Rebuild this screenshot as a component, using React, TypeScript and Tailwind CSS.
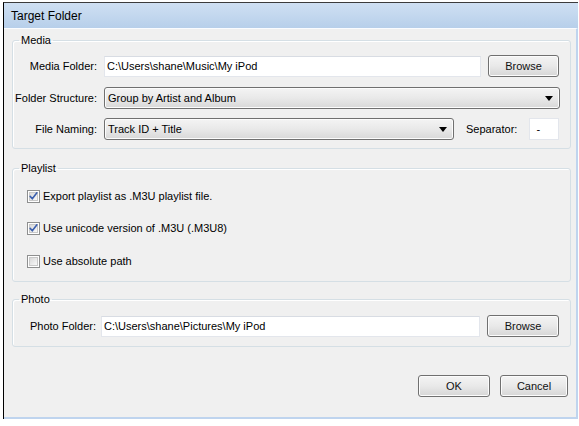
import React from "react";

const font = { fontFamily: '"Liberation Sans", Arial, sans-serif' };

function Btn({ label, w }: { label: string; w: string }) {
  return (
    <div
      className={`${w} h-[22px] shrink-0 flex items-center justify-center rounded-[3px] border border-[#707070] bg-gradient-to-b from-[#f4f4f4] via-[#e9e9e9] to-[#d6d6d6] text-[11px] text-[#111] shadow-[inset_0_0_0_1px_#fcfcfc]`}
    >
      {label}
    </div>
  );
}

function Select({ value, w }: { value: string; w: string }) {
  return (
    <div
      className={`${w} h-[22px] shrink-0 flex items-center justify-between rounded-[3px] border border-[#707070] bg-gradient-to-b from-[#f4f4f4] via-[#e9e9e9] to-[#d8d8d8] pl-[3px] pr-[6px] text-[11px] text-black shadow-[inset_0_0_0_1px_#fcfcfc]`}
    >
      <span>{value}</span>
      <svg width="8" height="5" viewBox="0 0 8 5">
        <path d="M0 0 L8 0 L4 5 Z" fill="#000" />
      </svg>
    </div>
  );
}

function Input({ value, w }: { value: string; w: string }) {
  return (
    <div
      className={`${w} h-[21px] shrink-0 flex items-center bg-white border border-[#e3e6ec] border-t-[#d8dce3] pl-[2px] text-[11px] text-black`}
    >
      {value}
    </div>
  );
}

function Check({ checked, label, cls }: { checked: boolean; label: string; cls: string }) {
  return (
    <div className={`${cls} h-[17px] flex items-center pl-[14px]`}>
      <svg width="13" height="13" viewBox="0 0 13 13" className="shrink-0">
        <defs>
          <linearGradient id="cbg" x1="0" y1="0" x2="1" y2="1">
            <stop offset="0" stopColor="#d6d6d6" />
            <stop offset="1" stopColor="#fbfbfb" />
          </linearGradient>
        </defs>
        <rect x="0.5" y="0.5" width="12" height="12" fill="#fff" stroke="#8e8f8f" />
        <rect x="2.5" y="2.5" width="8" height="8" fill="url(#cbg)" stroke="#c8c8c8" />
        {checked && (
          <path
            d="M3.2 6.4 L5.3 8.8 L9.9 2.8"
            fill="none"
            stroke="#3b5fae"
            strokeWidth="1.6"
            strokeLinecap="round"
            strokeLinejoin="round"
          />
        )}
      </svg>
      <span className="ml-[3px] text-[11px] text-black">{label}</span>
    </div>
  );
}

function Group({ title, cls, children }: { title: string; cls: string; children: React.ReactNode }) {
  return (
    <fieldset className={`${cls} rounded-[3px] border border-[#d5dfe5] shadow-[inset_1px_1px_0_#fff]`}>
      <legend className="ml-[6px] px-[2px] text-[11px] leading-[13px] text-black">{title}</legend>
      {children}
    </fieldset>
  );
}

export default function App() {
  return (
    <div className="w-[579px] h-[426px] bg-white pt-[2px] pl-[3px]" style={font}>
      <div className="w-[575px] h-[417px] flex flex-col border-l border-t border-l-black border-t-[#3c3c3c] bg-[#f0f0f0]">
        <div className="h-[25px] shrink-0 flex items-center pl-[7px] text-[12px] text-black bg-gradient-to-b from-[#cfe0f3] to-[#b7cfea]">
          Target Folder
        </div>
        <div className="flex-1 flex flex-col pl-[8px] pr-[5px] pt-[5px] border-r-2 border-b-2 border-[#bfd4ee] border-t border-t-[#fafcff]">
          <Group title="Media" cls="pb-[8px]">
            <div className="mt-[8px] h-[22px] flex items-center">
              <div className="w-[84px] text-right text-[11px] text-black">Media Folder:</div>
              <div className="ml-[7px]">
                <Input value="C:\Users\shane\Music\My iPod" w="w-[377px]" />
              </div>
              <div className="ml-[7px]">
                <Btn label="Browse" w="w-[71px]" />
              </div>
            </div>
            <div className="mt-[10px] h-[22px] flex items-center">
              <div className="w-[84px] text-right text-[11px] text-black">Folder Structure:</div>
              <div className="ml-[7px]">
                <Select value="Group by Artist and Album" w="w-[456px]" />
              </div>
            </div>
            <div className="mt-[9px] h-[22px] flex items-center">
              <div className="w-[84px] text-right text-[11px] text-black">File Naming:</div>
              <div className="ml-[7px]">
                <Select value="Track ID + Title" w="w-[350px]" />
              </div>
              <div className="ml-[12px] text-[11px] text-black">Separator:</div>
              <div className="ml-[12px] w-[30px] h-[22px] flex items-center bg-white border border-[#e3e6ec] pl-[6px] text-[11px] text-black">
                -
              </div>
            </div>
          </Group>

          <Group title="Playlist" cls="mt-[13px] pb-[11px]">
            <Check checked cls="mt-[13px]" label="Export playlist as .M3U playlist file." />
            <Check checked cls="mt-[15px]" label="Use unicode version of .M3U (.M3U8)" />
            <Check checked={false} cls="mt-[16px]" label="Use absolute path" />
          </Group>

          <Group title="Photo" cls="mt-[11px] pb-[9px]">
            <div className="mt-[9px] h-[22px] flex items-center">
              <div className="w-[83px] text-right text-[11px] text-black">Photo Folder:</div>
              <div className="ml-[5px]">
                <Input value="C:\Users\shane\Pictures\My iPod" w="w-[379px]" />
              </div>
              <div className="ml-[7px]">
                <Btn label="Browse" w="w-[72px]" />
              </div>
            </div>
          </Group>

          <div className="mt-[28px] mr-[3px] flex justify-end gap-[10px]">
            <Btn label="OK" w="w-[72px]" />
            <Btn label="Cancel" w="w-[68px]" />
          </div>
        </div>
      </div>
    </div>
  );
}
